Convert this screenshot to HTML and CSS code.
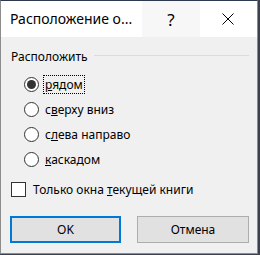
FILE: index.html
```html
<!DOCTYPE html>
<html lang="ru">
<head>
<meta charset="utf-8">
<link rel="stylesheet" href="styles.css">
</head>
<body>
<div class="dialog">
  <div class="titlebar">
    <div class="title">Расположение о...</div>
    <div class="tb-btn help">?</div>
    <div class="tb-btn close">
      <svg width="12" height="12" viewBox="0 0 12 12"><path d="M0.5 0.5 L11.5 11.5 M11.5 0.5 L0.5 11.5" stroke="#000" stroke-width="1" fill="none"/></svg>
    </div>
  </div>
  <div class="content">
    <div class="group-head">
      <span class="group-label">Расположить</span>
      <span class="group-line"></span>
    </div>
    <div class="radios">
      <div class="row"><span class="radio checked"></span><span class="label focus"><u>р</u>ядом</span></div>
      <div class="row"><span class="radio"></span><span class="label">с<u>в</u>ерху вниз</span></div>
      <div class="row"><span class="radio"></span><span class="label">с<u>л</u>ева направо</span></div>
      <div class="row"><span class="radio"></span><span class="label"><u>к</u>аскадом</span></div>
    </div>
    <div class="check-row"><span class="checkbox"></span><span class="label">Только окна <u>т</u>екущей книги</span></div>
    <div class="buttons">
      <div class="btn default">OK</div>
      <div class="btn">Отмена</div>
    </div>
  </div>
</div>
</body>
</html>
```
FILE: styles.css
```css
html, body {
  margin: 0;
  padding: 0;
}
body {
  width: 260px;
  height: 255px;
  background: #3b4150;
  font-family: "Noto Sans", "Liberation Sans", sans-serif;
  color: #000;
  overflow: hidden;
}
.dialog {
  box-sizing: border-box;
  width: 258px;
  height: 254px;
  background: #f0f0f0;
  border: 1px solid #8c8c8c;
  border-top-color: #2d3850;
  display: flex;
  flex-direction: column;
}
.titlebar {
  height: 36px;
  background: #fff;
  display: flex;
  align-items: stretch;
}
.title {
  flex: 1;
  font-size: 14px;
  line-height: 36px;
  padding-left: 9px;
  white-space: nowrap;
}
.tb-btn {
  width: 58px;
  display: flex;
  align-items: center;
  justify-content: center;
}
.help {
  background: #f7f7f7;
  font-size: 17px;
}
.close {
  width: 56px;
  padding-right: 1px;
}
.content {
  padding: 0 9px;
  display: flex;
  flex-direction: column;
  font-size: 12px;
}
.group-head {
  margin-top: 11px;
  height: 18px;
  display: flex;
  align-items: center;
  gap: 6px;
  padding-left: 1px;
}
.group-label {
  line-height: 18px;
  white-space: nowrap;
}
.group-line {
  flex: 1;
  height: 1px;
  background: #dcdcdc;
  margin-right: -1px;
  margin-top: -3px;
}
.radios {
  margin-top: 6px;
  padding-left: 14px;
  display: flex;
  flex-direction: column;
}
.row {
  height: 25px;
  display: flex;
  align-items: center;
}
.radio {
  box-sizing: border-box;
  width: 15px;
  height: 15px;
  border: 1px solid #333;
  border-radius: 50%;
  background: #fff;
  margin-right: 4px;
  display: flex;
  align-items: center;
  justify-content: center;
  flex: none;
}
.radio.checked::after {
  content: "";
  width: 9px;
  height: 9px;
  border-radius: 50%;
  background: #333;
}
.label {
  white-space: nowrap;
  line-height: 17px;
  border: 1px solid transparent;
  padding: 0 1px;
}
.label.focus {
  border: 1px dotted #000;
}
.check-row {
  margin-top: 5px;
  height: 25px;
  display: flex;
  align-items: center;
  padding-left: 1px;
}
.checkbox {
  box-sizing: border-box;
  width: 15px;
  height: 15px;
  border: 1px solid #333;
  background: #fff;
  margin-right: 5px;
  flex: none;
}
.buttons {
  margin-top: 14px;
  display: flex;
  justify-content: space-between;
  margin-right: -1px;
}
.btn {
  box-sizing: border-box;
  width: 112px;
  height: 27px;
  background: #e1e1e1;
  border: 1px solid #adadad;
  display: flex;
  align-items: center;
  justify-content: center;
  font-size: 12px;
}
.btn.default {
  width: 111px;
  border: 2px solid #0078d7;
}
```
